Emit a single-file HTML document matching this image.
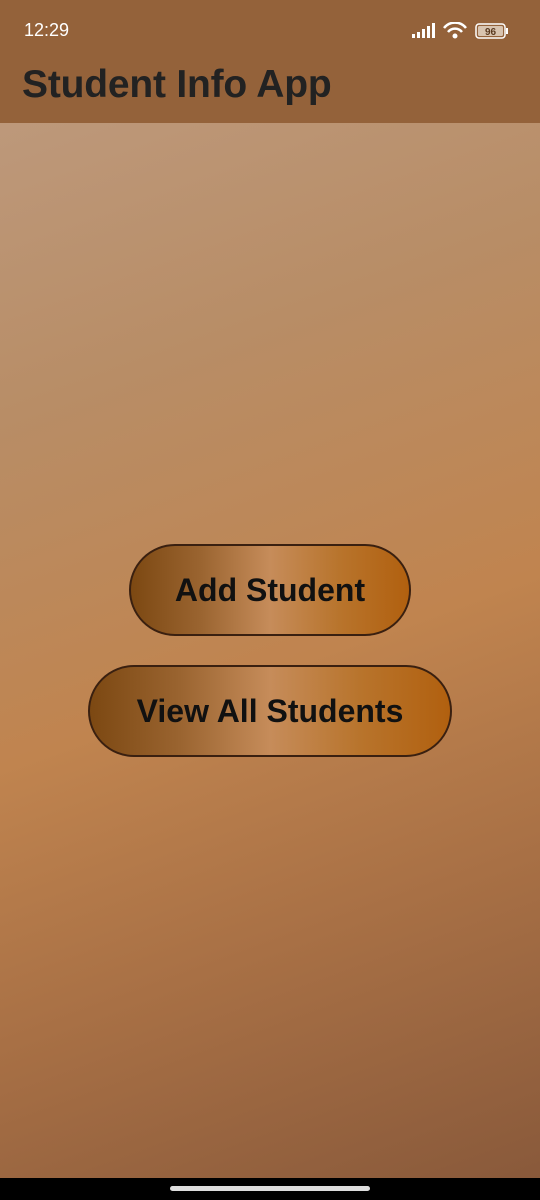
<!DOCTYPE html>
<html><head><style>
*{margin:0;padding:0;box-sizing:border-box}
body{width:540px;height:1200px;overflow:hidden;font-family:"Liberation Sans",sans-serif;position:relative;
background:linear-gradient(160deg,#bf9d83 0%,#b88d66 30%,#c0844f 55%,#a87045 75%,#87583a 100%)}
.hdr{position:absolute;top:0;left:0;width:540px;height:123px;background:#94623a}
.time{position:absolute;left:24px;top:20px;font-size:18px;color:#fff}
.title{position:absolute;left:22px;top:63px;font-size:39px;color:#222;font-weight:bold;letter-spacing:-0.2px}
.btn{position:absolute;border:2.5px solid #3a2010;border-radius:46px;
background:linear-gradient(90deg,#7c4812 0%,#9a6430 25%,#c68c5a 50%,#b8742c 75%,#b1600f 100%);
display:flex;align-items:center;justify-content:center;font-size:32px;font-weight:bold;color:#111}
.nav{position:absolute;left:0;top:1178px;width:540px;height:22px;background:#000}
.handle{position:absolute;left:170px;top:8px;width:200px;height:5px;border-radius:3px;background:#ddd}
</style></head><body>
<div class="hdr">
<div class="time">12:29</div>
<svg style="position:absolute;left:412px;top:22px" width="100" height="18">
<rect x="0" y="12" width="3" height="4" fill="#fff"/><rect x="5" y="10" width="3" height="6" fill="#fff"/>
<rect x="10" y="7" width="3" height="9" fill="#fff"/><rect x="15" y="4" width="3" height="12" fill="#fff"/><rect x="20" y="1" width="3" height="15" fill="#fff"/>
<path d="M32 6 A14 14 0 0 1 54 6" stroke="#fff" stroke-width="2.5" fill="none"/>
<path d="M36 10 A9 9 0 0 1 50 10" stroke="#fff" stroke-width="2.5" fill="none"/>
<circle cx="43" cy="14" r="2.5" fill="#fff"/>
<rect x="64" y="2" width="29" height="14" rx="3" fill="none" stroke="#fff" stroke-width="1.5"/>
<rect x="66" y="4" width="25" height="10" rx="1.5" fill="#d8c4b0"/>
<rect x="94" y="6" width="2" height="6" fill="#fff"/>
<text x="78.5" y="13" font-size="10" font-family="Liberation Sans" text-anchor="middle" fill="#5a3a20" font-weight="bold">96</text>
</svg>
<div class="title">Student Info App</div>
</div>
<div class="btn" style="left:129px;top:544px;width:282px;height:92px">Add Student</div>
<div class="btn" style="left:88px;top:665px;width:364px;height:92px">View All Students</div>
<div class="nav"><div class="handle"></div></div>
</body></html>
